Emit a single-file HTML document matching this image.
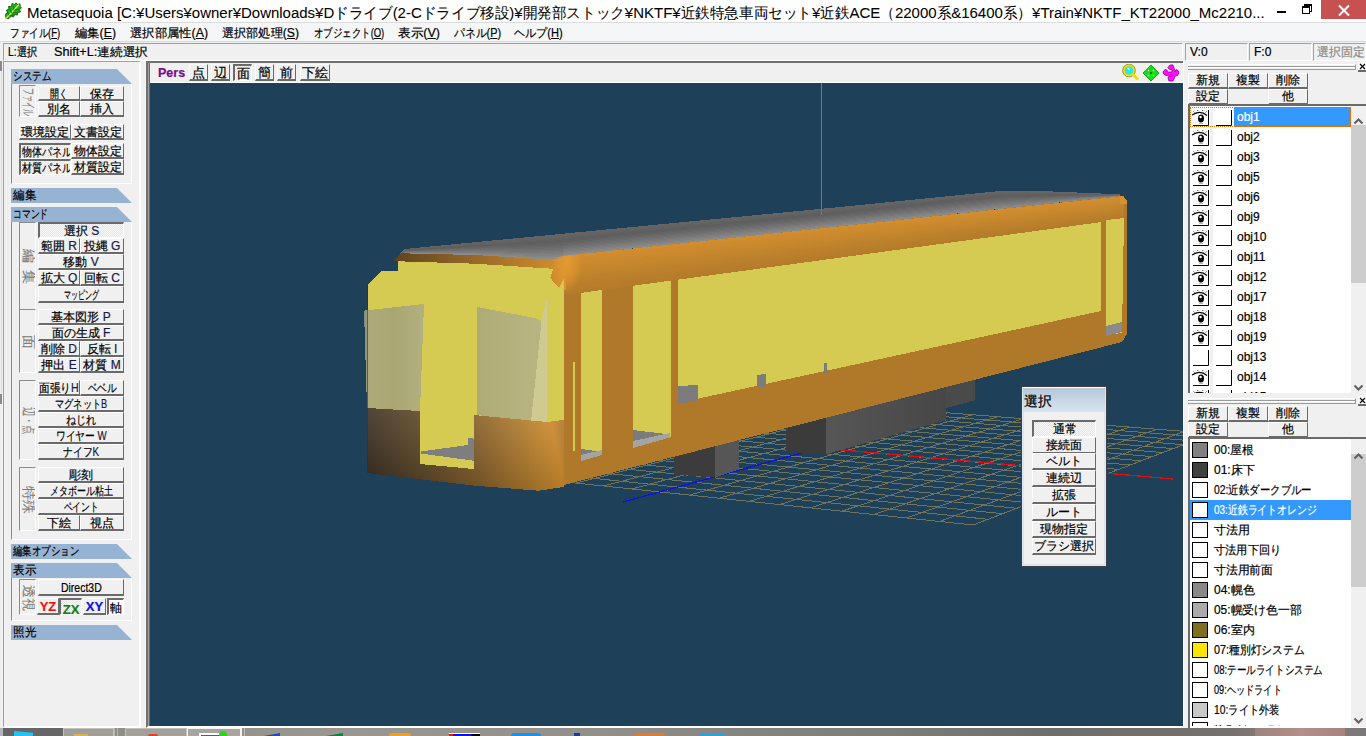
<!DOCTYPE html><html lang="ja"><head><meta charset="utf-8"><style>
*{box-sizing:border-box;margin:0;padding:0}
html,body{width:1366px;height:736px;overflow:hidden;background:#f0f0f0;font-family:"Liberation Sans", sans-serif;position:relative;-webkit-text-stroke-width:0.2px}
div{position:absolute}
.t{white-space:nowrap;line-height:1}
.btn{background:#f0f0f0;border-top:1px solid #fff;border-left:1px solid #fff;border-right:1px solid #6a6a6a;border-bottom:2px solid #6a6a6a;font-size:12px;color:#000;text-align:center;line-height:13px;white-space:nowrap;overflow:hidden}
.prs{border-top:2px solid #6a6a6a;border-left:2px solid #6a6a6a;border-right:1px solid #fff;border-bottom:1px solid #fff;background-color:#f7f7f7;background-image:linear-gradient(45deg,#e6e6e6 25%,transparent 25%,transparent 75%,#e6e6e6 75%),linear-gradient(45deg,#e6e6e6 25%,transparent 25%,transparent 75%,#e6e6e6 75%);background-size:2px 2px;background-position:0 0,1px 1px}
.hdr{background:#97b3d3;font-size:12px;line-height:14px;padding-left:1px;color:#000;clip-path:polygon(0 0,106px 0,121px 100%,0 100%)}
.lbl{border-top:1px solid #8c8c8c;border-left:1px solid #8c8c8c;border-right:1px solid #fff;border-bottom:1px solid #fff;color:#8c8c8c;font-size:11px;writing-mode:vertical-rl;text-align:center;line-height:15px;overflow:hidden}
.grp{border-left:1px solid #fff;border-right:1px solid #fff;border-bottom:1px solid #fff}
.k{color:#16184a}
.sb{border-top:1px solid #a0a0a0;border-left:1px solid #a0a0a0;border-right:1px solid #fff;border-bottom:1px solid #fff;font-size:12px;line-height:16px;padding-left:4px;white-space:nowrap;overflow:hidden}
.row{height:20px;font-size:12px;line-height:20px;white-space:nowrap}
.f{display:inline-block;white-space:nowrap;transform-origin:0 50%}
.fc{display:inline-block;white-space:nowrap;transform-origin:50% 50%}
</style></head><body>

<div style="left:0;top:0;width:1366px;height:23px;background:#fff;border-bottom:1px solid #dcdcdc"></div>
<div style="left:4px;top:2px;width:18px;height:18px"><svg width="18" height="18" viewBox="0 0 18 18">
<path d="M2 16.5 L1.5 12 L3.5 11 L2.5 8 L5 7.5 L4.5 4.5 L7.5 4.5 L8 1.5 L10.5 2.5 L12 0.8 L13.5 2.5 L16 1.8 L16.2 4.5 L17.5 6 L15.5 7.5 L16.5 10 L13.5 10.5 L13.5 13 L10.5 12.5 L9.5 15 L7 14 L5 16.5 Z" fill="#22b020" stroke="#0b5e12" stroke-width="0.9" stroke-linejoin="round"/>
<path d="M2 16.5 L15 2.5" stroke="#d8e850" stroke-width="1.3"/>
<path d="M5 13.5 L3.5 10 M7.5 11 L6 6.5 M10 8.5 L9.5 4 M6.5 13.5 L11 13 M8.5 11 L13.5 10.5 M11 8 L15.5 7" stroke="#0e6a10" stroke-width="0.8"/>
</svg></div>
<div class="t" style="left:27px;top:5px;font-size:15.4px;color:#000;-webkit-text-stroke-width:0.05px"><span class="f" style="--w:1238;transform:scaleX(0.9733)">Metasequoia [C:¥Users¥owner¥Downloads¥Dドライブ(2-Cドライブ移設)¥開発部ストック¥NKTF¥近鉄特急車両セット¥近鉄ACE（22000系&amp;16400系）¥Train¥NKTF_KT22000_Mc2210...</span></div>
<div style="left:1277px;top:11px;width:9px;height:2px;background:#000"></div>
<div style="left:1304px;top:4px;width:8px;height:8px;border:1px solid #000;border-top-width:2px"></div>
<div style="left:1302px;top:6px;width:8px;height:8px;border:1px solid #000;border-top-width:2px;background:#fff"></div>
<div style="left:1321px;top:0;width:45px;height:19px;background:#c75050"></div>
<div style="left:1337px;top:3px;width:14px;height:13px"><svg width="14" height="13"><path d="M2 1.5 L12 11.5 M12 1.5 L2 11.5" stroke="#fff" stroke-width="2"/></svg></div>
<div style="left:0;top:23px;width:1366px;height:19px;background:#f5f6f7;border-bottom:1px solid #d8d8d8"></div>
<div class="t" style="left:10px;top:27px;font-size:12px;color:#000"><span class="f" style="--w:50;transform:scaleX(0.7937)">ファイル(<u>F</u>)</span></div>
<div class="t" style="left:75px;top:27px;font-size:12px;color:#000"><span class="f" style="--w:41;transform:scaleX(1.0250)">編集(<u>E</u>)</span></div>
<div class="t" style="left:130px;top:27px;font-size:12px;color:#000"><span class="f" style="--w:78;transform:scaleX(1.0263)">選択部属性(<u>A</u>)</span></div>
<div class="t" style="left:222px;top:27px;font-size:12px;color:#000"><span class="f" style="--w:77;transform:scaleX(1.0132)">選択部処理(<u>S</u>)</span></div>
<div class="t" style="left:314px;top:27px;font-size:12px;color:#000"><span class="f" style="--w:70;transform:scaleX(0.7865)">オブジェクト(<u>O</u>)</span></div>
<div class="t" style="left:398px;top:27px;font-size:12px;color:#000"><span class="f" style="--w:42;transform:scaleX(1.0500)">表示(<u>V</u>)</span></div>
<div class="t" style="left:454px;top:27px;font-size:12px;color:#000"><span class="f" style="--w:47;transform:scaleX(0.9038)">パネル(<u>P</u>)</span></div>
<div class="t" style="left:514px;top:27px;font-size:12px;color:#000"><span class="f" style="--w:49;transform:scaleX(0.9245)">ヘルプ(<u>H</u>)</span></div>
<div class="sb" style="left:3px;top:43px;width:1180px;height:18px"><span class="f" style="--w:29;transform:scaleX(0.8529)">L:選択</span></div><div class="t" style="left:54px;top:46px;font-size:12px"><span class="f" style="--w:94;transform:scaleX(1.0562)">Shift+L:連続選択</span></div>
<div class="sb" style="left:1185px;top:43px;width:63px;height:18px">V:0</div>
<div class="sb" style="left:1249px;top:43px;width:63px;height:18px">F:0</div>
<div class="sb" style="left:1313px;top:43px;width:53px;height:18px;color:#8a8a8a;padding-left:3px">選択固定</div><div style="left:3px;top:61px;width:138px;height:667px;border-left:1px solid #a0a0a0;border-top:1px solid #a0a0a0;border-right:2px solid #fff;border-bottom:2px solid #fff"></div>
<div style="left:0;top:61px;width:2px;height:10px;background:#8a8a8a"></div>
<div style="left:0;top:394px;width:2px;height:10px;background:#8a8a8a"></div>
<div style="left:1px;top:71px;width:1px;height:323px;background:#dcdcdc"></div>
<div class="hdr" style="left:11px;top:69px;width:121px;height:15px;padding-left:2px"><span class="f" style="--w:38;transform:scaleX(0.7917)">システム</span></div>
<div style="left:11px;top:84px;width:121px;height:100px;border-left:1px solid #8c8c8c;border-right:1px solid #fff;border-bottom:1px solid #fff"></div>
<div style="left:19px;top:85px;width:17px;height:32px;border-top:1px solid #8c8c8c;border-left:1px solid #8c8c8c;border-right:1px solid #fff;border-bottom:1px solid #fff;overflow:hidden"><div style="left:-8.5px;top:7.5px;width:32px;height:15px;transform:rotate(90deg);display:flex;justify-content:center;font-size:13.5px;line-height:15px;color:#7c7c7c;white-space:nowrap;-webkit-text-stroke-width:0.1px"><span class="fc" style="--w:28;transform:scaleX(0.5000)">ファイル</span></div></div>
<div class="btn" style="left:38px;top:86px;width:42px;height:15px;line-height:12px;padding-top:1px;"><span class="fc" style="--w:18;transform:scaleX(0.7500)">開く</span></div>
<div class="btn" style="left:80px;top:86px;width:44px;height:15px;line-height:12px;padding-top:1px;">保存</div>
<div class="btn" style="left:38px;top:101px;width:42px;height:16px;line-height:13px;padding-top:1px;">別名</div>
<div class="btn" style="left:80px;top:101px;width:44px;height:16px;line-height:13px;padding-top:1px;">挿入</div>
<div class="btn" style="left:19px;top:124px;width:52px;height:16px;line-height:13px;padding-top:1px;">環境設定</div>
<div class="btn" style="left:71px;top:124px;width:53px;height:16px;line-height:13px;padding-top:1px;">文書設定</div>
<div class="btn prs" style="left:19px;top:143px;width:52px;height:16px;line-height:13px;padding-top:1px;text-align:left;padding-left:1px"><span class="f" style="--w:50;transform:scaleX(0.8333)">物体パネル</span></div>
<div class="btn" style="left:71px;top:143px;width:53px;height:16px;line-height:13px;padding-top:1px;">物体設定</div>
<div class="btn prs" style="left:19px;top:159px;width:52px;height:16px;line-height:13px;padding-top:1px;text-align:left;padding-left:1px"><span class="f" style="--w:50;transform:scaleX(0.8333)">材質パネル</span></div>
<div class="btn" style="left:71px;top:159px;width:53px;height:16px;line-height:13px;padding-top:1px;">材質設定</div>
<div class="hdr" style="left:11px;top:188px;width:121px;height:15px;padding-left:2px"><span class="f" style="--w:23;transform:scaleX(0.9583)">編集</span></div>
<div class="hdr" style="left:11px;top:207px;width:121px;height:15px;padding-left:2px"><span class="f" style="--w:35;transform:scaleX(0.7292)">コマンド</span></div>
<div style="left:11px;top:222px;width:121px;height:318px;border-left:1px solid #8c8c8c;border-right:1px solid #fff;border-bottom:1px solid #fff"></div>
<div style="left:19px;top:222px;width:17px;height:88px;border-top:1px solid #8c8c8c;border-left:1px solid #8c8c8c;border-right:1px solid #fff;border-bottom:1px solid #fff;overflow:hidden"><div style="left:-36.5px;top:35.5px;width:88px;height:15px;transform:rotate(90deg);display:flex;justify-content:center;font-size:13.5px;line-height:15px;color:#7c7c7c;white-space:nowrap;-webkit-text-stroke-width:0.1px"><span style="letter-spacing:7px;padding-left:7px">編集</span></div></div>
<div class="btn prs" style="left:38px;top:222px;width:86px;height:16px;line-height:13px;padding-top:1px;">選択 <span class="k">S</span></div>
<div class="btn" style="left:38px;top:238px;width:42px;height:16px;line-height:13px;padding-top:1px;">範囲 <span class="k">R</span></div>
<div class="btn" style="left:80px;top:238px;width:44px;height:16px;line-height:13px;padding-top:1px;">投縄 <span class="k">G</span></div>
<div class="btn" style="left:38px;top:254px;width:86px;height:16px;line-height:13px;padding-top:1px;">移動 <span class="k">V</span></div>
<div class="btn" style="left:38px;top:270px;width:42px;height:16px;line-height:13px;padding-top:1px;">拡大 <span class="k">Q</span></div>
<div class="btn" style="left:80px;top:270px;width:44px;height:16px;line-height:13px;padding-top:1px;">回転 <span class="k">C</span></div>
<div class="btn" style="left:38px;top:286px;width:86px;height:17px;line-height:14px;padding-top:1px;"><span class="fc" style="--w:35;transform:scaleX(0.5833)">マッピング</span></div>
<div style="left:19px;top:309px;width:17px;height:64px;border-top:1px solid #8c8c8c;border-left:1px solid #8c8c8c;border-right:1px solid #fff;border-bottom:1px solid #fff;overflow:hidden"><div style="left:-24.5px;top:23.5px;width:64px;height:15px;transform:rotate(90deg);display:flex;justify-content:center;font-size:13.5px;line-height:15px;color:#7c7c7c;white-space:nowrap;-webkit-text-stroke-width:0.1px"><span style="letter-spacing:0px;padding-left:0px">面</span></div></div>
<div class="btn" style="left:38px;top:309px;width:86px;height:16px;line-height:13px;padding-top:1px;">基本図形 <span class="k">P</span></div>
<div class="btn" style="left:38px;top:325px;width:86px;height:16px;line-height:13px;padding-top:1px;">面の生成 <span class="k">F</span></div>
<div class="btn" style="left:38px;top:341px;width:42px;height:16px;line-height:13px;padding-top:1px;">削除 <span class="k">D</span></div>
<div class="btn" style="left:80px;top:341px;width:44px;height:16px;line-height:13px;padding-top:1px;">反転 <span class="k">I</span></div>
<div class="btn" style="left:38px;top:357px;width:42px;height:16px;line-height:13px;padding-top:1px;">押出 <span class="k">E</span></div>
<div class="btn" style="left:80px;top:357px;width:44px;height:16px;line-height:13px;padding-top:1px;">材質 <span class="k">M</span></div>
<div style="left:19px;top:380px;width:17px;height:80px;border-top:1px solid #8c8c8c;border-left:1px solid #8c8c8c;border-right:1px solid #fff;border-bottom:1px solid #fff;overflow:hidden"><div style="left:-32.5px;top:31.5px;width:80px;height:15px;transform:rotate(90deg);display:flex;justify-content:center;font-size:13.5px;line-height:15px;color:#7c7c7c;white-space:nowrap;-webkit-text-stroke-width:0.1px"><span class="fc" style="--w:28;transform:scaleX(0.6667)">辺・点</span></div></div>
<div class="btn" style="left:38px;top:380px;width:42px;height:16px;line-height:13px;padding-top:1px;"><span class="f" style="--w:40;transform:scaleX(0.8889)">面張り<span class="k">H</span></span></div>
<div class="btn" style="left:80px;top:380px;width:44px;height:16px;line-height:13px;padding-top:1px;"><span class="fc" style="--w:29;transform:scaleX(0.8056)">ベベル</span></div>
<div class="btn" style="left:38px;top:396px;width:86px;height:16px;line-height:13px;padding-top:1px;"><span class="fc" style="--w:52;transform:scaleX(0.7647)">マグネット<span class="k">B</span></span></div>
<div class="btn" style="left:38px;top:412px;width:86px;height:16px;line-height:13px;padding-top:1px;"><span class="fc" style="--w:30;transform:scaleX(0.8333)">ねじれ</span></div>
<div class="btn" style="left:38px;top:428px;width:86px;height:16px;line-height:13px;padding-top:1px;"><span class="fc" style="--w:51;transform:scaleX(0.8095)">ワイヤー <span class="k">W</span></span></div>
<div class="btn" style="left:38px;top:444px;width:86px;height:16px;line-height:13px;padding-top:1px;"><span class="fc" style="--w:36;transform:scaleX(0.8182)">ナイフ<span class="k">K</span></span></div>
<div style="left:19px;top:467px;width:17px;height:64px;border-top:1px solid #8c8c8c;border-left:1px solid #8c8c8c;border-right:1px solid #fff;border-bottom:1px solid #fff;overflow:hidden"><div style="left:-24.5px;top:23.5px;width:64px;height:15px;transform:rotate(90deg);display:flex;justify-content:center;font-size:13.5px;line-height:15px;color:#7c7c7c;white-space:nowrap;-webkit-text-stroke-width:0.1px"><span style="letter-spacing:0px;padding-left:0px">特殊</span></div></div>
<div class="btn" style="left:38px;top:467px;width:86px;height:16px;line-height:13px;padding-top:1px;">彫刻</div>
<div class="btn" style="left:38px;top:483px;width:86px;height:16px;line-height:13px;padding-top:1px;"><span class="fc" style="--w:63;transform:scaleX(0.7500)">メタボール粘土</span></div>
<div class="btn" style="left:38px;top:499px;width:86px;height:16px;line-height:13px;padding-top:1px;"><span class="fc" style="--w:35;transform:scaleX(0.7292)">ペイント</span></div>
<div class="btn" style="left:38px;top:515px;width:42px;height:16px;line-height:13px;padding-top:1px;">下絵</div>
<div class="btn" style="left:80px;top:515px;width:44px;height:16px;line-height:13px;padding-top:1px;">視点</div>
<div class="hdr" style="left:11px;top:544px;width:121px;height:15px;padding-left:2px"><span class="f" style="--w:66;transform:scaleX(0.7857)">編集オプション</span></div>
<div class="hdr" style="left:11px;top:563px;width:121px;height:15px;padding-left:2px"><span class="f" style="--w:23;transform:scaleX(0.9583)">表示</span></div>
<div style="left:11px;top:578px;width:121px;height:43px;border-left:1px solid #8c8c8c;border-right:1px solid #fff;border-bottom:1px solid #fff"></div>
<div style="left:19px;top:579px;width:17px;height:36px;border-top:1px solid #8c8c8c;border-left:1px solid #8c8c8c;border-right:1px solid #fff;border-bottom:1px solid #fff;overflow:hidden"><div style="left:-10.5px;top:9.5px;width:36px;height:15px;transform:rotate(90deg);display:flex;justify-content:center;font-size:13.5px;line-height:15px;color:#7c7c7c;white-space:nowrap;-webkit-text-stroke-width:0.1px"><span class="fc" style="--w:26;transform:scaleX(0.9286)">透視</span></div></div>
<div class="btn" style="left:38px;top:579px;width:86px;height:17px;line-height:14px;padding-top:1px;"><span class="fc" style="--w:41;transform:scaleX(0.8723)">Direct3D</span></div>
<div class="btn" style="left:37px;top:598px;width:22px;height:17px;line-height:14px;padding-top:1px;"><b style="color:#f01010;font-size:13px;font-style:normal">YZ</b></div>
<div class="btn prs" style="left:59px;top:598px;width:23px;height:17px;line-height:14px;padding-top:1px;"><b style="color:#108010;font-size:13px;font-style:normal;position:relative;top:2px">ZX</b></div>
<div class="btn" style="left:83px;top:598px;width:23px;height:17px;line-height:14px;padding-top:1px;"><b style="color:#1010e0;font-size:13px;font-style:normal">XY</b></div>
<div class="btn prs" style="left:107px;top:598px;width:17px;height:17px;line-height:14px;padding-top:1px;background:#fff">軸</div>
<div class="hdr" style="left:11px;top:625px;width:121px;height:15px;padding-left:2px"><span class="f" style="--w:23;transform:scaleX(0.9583)">照光</span></div><div style="left:1188px;top:64px;width:168px;height:6px;border-top:1px solid #fff;border-bottom:1px solid #9a9a9a;border-right:1px solid #9a9a9a"></div><div style="left:1188px;top:66px;width:167px;height:2px;border-top:1px solid #9a9a9a;border-bottom:1px solid #fff"></div>
<div style="left:1358px;top:62px;width:8px;height:10px;background:#f8f8f8;border-bottom:2px solid #6a6a6a"><svg width="8" height="8" style="position:absolute;left:1px;top:1px"><path d="M1 1 L6 6 M6 1 L1 6" stroke="#000" stroke-width="1.1"/></svg></div>
<div class="btn" style="left:1188px;top:73px;width:40px;height:16px;line-height:13px;">新規</div>
<div class="btn" style="left:1228px;top:73px;width:40px;height:16px;line-height:13px;">複製</div>
<div class="btn" style="left:1268px;top:73px;width:40px;height:16px;line-height:13px;">削除</div>
<div class="btn" style="left:1188px;top:89px;width:40px;height:16px;line-height:13px;">設定</div>
<div class="btn" style="left:1268px;top:89px;width:40px;height:16px;line-height:13px;">他</div>
<div style="left:1188px;top:104px;width:178px;height:289px;background:#fff;border-top:2px solid #6a6a6a;border-left:2px solid #6a6a6a;overflow:hidden"></div>
<div style="left:1190px;top:107px;width:161px;height:20px;overflow:hidden"><div style="left:0;top:0;width:20px;height:20px;background:#fff"><svg width="20" height="20" viewBox="0 0 20 20" style="position:absolute;left:0;top:0"><path d="M2 8 Q10 2.5 17 8.5" stroke="#000" fill="none" stroke-width="1.2"/><path d="M4.5 5.5 L3.5 4.5 M8 4 L7.5 3 M12.5 4 L13 3 M15.5 5.5 L16.5 4.5" stroke="#000" stroke-width="0.7"/><ellipse cx="11" cy="11.5" rx="3" ry="4" fill="#000"/><circle cx="10.6" cy="10" r="1.2" fill="#fff"/><path d="M9 16.5 L13 16.5" stroke="#888" stroke-width="0.6"/><path d="M18.5 3 L18.5 18.5 L3 18.5" stroke="#000" stroke-width="1" fill="none"/></svg></div><div style="left:20px;top:0;width:3px;height:20px;background:#f0f0f0"></div><div style="left:23px;top:0;width:20px;height:20px;background:#fff"><svg width="20" height="20" viewBox="0 0 20 20" style="position:absolute;left:0;top:0"><path d="M18.5 3 L18.5 18.5 L3 18.5" stroke="#000" stroke-width="1" fill="none"/></svg></div><div style="left:44px;top:0;width:117px;height:20px;background:#3399ff"></div><div style="left:0;top:0;width:161px;height:20px;border:1px dotted #e07000"></div><div class="t" style="left:47px;top:4px;font-size:12px;color:#fff">obj1</div></div>
<div style="left:1190px;top:127px;width:161px;height:20px;overflow:hidden"><div style="left:0;top:0;width:20px;height:20px;background:#fff"><svg width="20" height="20" viewBox="0 0 20 20" style="position:absolute;left:0;top:0"><path d="M2 8 Q10 2.5 17 8.5" stroke="#000" fill="none" stroke-width="1.2"/><path d="M4.5 5.5 L3.5 4.5 M8 4 L7.5 3 M12.5 4 L13 3 M15.5 5.5 L16.5 4.5" stroke="#000" stroke-width="0.7"/><ellipse cx="11" cy="11.5" rx="3" ry="4" fill="#000"/><circle cx="10.6" cy="10" r="1.2" fill="#fff"/><path d="M9 16.5 L13 16.5" stroke="#888" stroke-width="0.6"/><path d="M18.5 3 L18.5 18.5 L3 18.5" stroke="#000" stroke-width="1" fill="none"/></svg></div><div style="left:20px;top:0;width:3px;height:20px;background:#f0f0f0"></div><div style="left:23px;top:0;width:20px;height:20px;background:#fff"><svg width="20" height="20" viewBox="0 0 20 20" style="position:absolute;left:0;top:0"><path d="M18.5 3 L18.5 18.5 L3 18.5" stroke="#000" stroke-width="1" fill="none"/></svg></div><div class="t" style="left:47px;top:4px;font-size:12px;color:#000">obj2</div></div>
<div style="left:1190px;top:147px;width:161px;height:20px;overflow:hidden"><div style="left:0;top:0;width:20px;height:20px;background:#fff"><svg width="20" height="20" viewBox="0 0 20 20" style="position:absolute;left:0;top:0"><path d="M2 8 Q10 2.5 17 8.5" stroke="#000" fill="none" stroke-width="1.2"/><path d="M4.5 5.5 L3.5 4.5 M8 4 L7.5 3 M12.5 4 L13 3 M15.5 5.5 L16.5 4.5" stroke="#000" stroke-width="0.7"/><ellipse cx="11" cy="11.5" rx="3" ry="4" fill="#000"/><circle cx="10.6" cy="10" r="1.2" fill="#fff"/><path d="M9 16.5 L13 16.5" stroke="#888" stroke-width="0.6"/><path d="M18.5 3 L18.5 18.5 L3 18.5" stroke="#000" stroke-width="1" fill="none"/></svg></div><div style="left:20px;top:0;width:3px;height:20px;background:#f0f0f0"></div><div style="left:23px;top:0;width:20px;height:20px;background:#fff"><svg width="20" height="20" viewBox="0 0 20 20" style="position:absolute;left:0;top:0"><path d="M18.5 3 L18.5 18.5 L3 18.5" stroke="#000" stroke-width="1" fill="none"/></svg></div><div class="t" style="left:47px;top:4px;font-size:12px;color:#000">obj3</div></div>
<div style="left:1190px;top:167px;width:161px;height:20px;overflow:hidden"><div style="left:0;top:0;width:20px;height:20px;background:#fff"><svg width="20" height="20" viewBox="0 0 20 20" style="position:absolute;left:0;top:0"><path d="M2 8 Q10 2.5 17 8.5" stroke="#000" fill="none" stroke-width="1.2"/><path d="M4.5 5.5 L3.5 4.5 M8 4 L7.5 3 M12.5 4 L13 3 M15.5 5.5 L16.5 4.5" stroke="#000" stroke-width="0.7"/><ellipse cx="11" cy="11.5" rx="3" ry="4" fill="#000"/><circle cx="10.6" cy="10" r="1.2" fill="#fff"/><path d="M9 16.5 L13 16.5" stroke="#888" stroke-width="0.6"/><path d="M18.5 3 L18.5 18.5 L3 18.5" stroke="#000" stroke-width="1" fill="none"/></svg></div><div style="left:20px;top:0;width:3px;height:20px;background:#f0f0f0"></div><div style="left:23px;top:0;width:20px;height:20px;background:#fff"><svg width="20" height="20" viewBox="0 0 20 20" style="position:absolute;left:0;top:0"><path d="M18.5 3 L18.5 18.5 L3 18.5" stroke="#000" stroke-width="1" fill="none"/></svg></div><div class="t" style="left:47px;top:4px;font-size:12px;color:#000">obj5</div></div>
<div style="left:1190px;top:187px;width:161px;height:20px;overflow:hidden"><div style="left:0;top:0;width:20px;height:20px;background:#fff"><svg width="20" height="20" viewBox="0 0 20 20" style="position:absolute;left:0;top:0"><path d="M2 8 Q10 2.5 17 8.5" stroke="#000" fill="none" stroke-width="1.2"/><path d="M4.5 5.5 L3.5 4.5 M8 4 L7.5 3 M12.5 4 L13 3 M15.5 5.5 L16.5 4.5" stroke="#000" stroke-width="0.7"/><ellipse cx="11" cy="11.5" rx="3" ry="4" fill="#000"/><circle cx="10.6" cy="10" r="1.2" fill="#fff"/><path d="M9 16.5 L13 16.5" stroke="#888" stroke-width="0.6"/><path d="M18.5 3 L18.5 18.5 L3 18.5" stroke="#000" stroke-width="1" fill="none"/></svg></div><div style="left:20px;top:0;width:3px;height:20px;background:#f0f0f0"></div><div style="left:23px;top:0;width:20px;height:20px;background:#fff"><svg width="20" height="20" viewBox="0 0 20 20" style="position:absolute;left:0;top:0"><path d="M18.5 3 L18.5 18.5 L3 18.5" stroke="#000" stroke-width="1" fill="none"/></svg></div><div class="t" style="left:47px;top:4px;font-size:12px;color:#000">obj6</div></div>
<div style="left:1190px;top:207px;width:161px;height:20px;overflow:hidden"><div style="left:0;top:0;width:20px;height:20px;background:#fff"><svg width="20" height="20" viewBox="0 0 20 20" style="position:absolute;left:0;top:0"><path d="M2 8 Q10 2.5 17 8.5" stroke="#000" fill="none" stroke-width="1.2"/><path d="M4.5 5.5 L3.5 4.5 M8 4 L7.5 3 M12.5 4 L13 3 M15.5 5.5 L16.5 4.5" stroke="#000" stroke-width="0.7"/><ellipse cx="11" cy="11.5" rx="3" ry="4" fill="#000"/><circle cx="10.6" cy="10" r="1.2" fill="#fff"/><path d="M9 16.5 L13 16.5" stroke="#888" stroke-width="0.6"/><path d="M18.5 3 L18.5 18.5 L3 18.5" stroke="#000" stroke-width="1" fill="none"/></svg></div><div style="left:20px;top:0;width:3px;height:20px;background:#f0f0f0"></div><div style="left:23px;top:0;width:20px;height:20px;background:#fff"><svg width="20" height="20" viewBox="0 0 20 20" style="position:absolute;left:0;top:0"><path d="M18.5 3 L18.5 18.5 L3 18.5" stroke="#000" stroke-width="1" fill="none"/></svg></div><div class="t" style="left:47px;top:4px;font-size:12px;color:#000">obj9</div></div>
<div style="left:1190px;top:227px;width:161px;height:20px;overflow:hidden"><div style="left:0;top:0;width:20px;height:20px;background:#fff"><svg width="20" height="20" viewBox="0 0 20 20" style="position:absolute;left:0;top:0"><path d="M2 8 Q10 2.5 17 8.5" stroke="#000" fill="none" stroke-width="1.2"/><path d="M4.5 5.5 L3.5 4.5 M8 4 L7.5 3 M12.5 4 L13 3 M15.5 5.5 L16.5 4.5" stroke="#000" stroke-width="0.7"/><ellipse cx="11" cy="11.5" rx="3" ry="4" fill="#000"/><circle cx="10.6" cy="10" r="1.2" fill="#fff"/><path d="M9 16.5 L13 16.5" stroke="#888" stroke-width="0.6"/><path d="M18.5 3 L18.5 18.5 L3 18.5" stroke="#000" stroke-width="1" fill="none"/></svg></div><div style="left:20px;top:0;width:3px;height:20px;background:#f0f0f0"></div><div style="left:23px;top:0;width:20px;height:20px;background:#fff"><svg width="20" height="20" viewBox="0 0 20 20" style="position:absolute;left:0;top:0"><path d="M18.5 3 L18.5 18.5 L3 18.5" stroke="#000" stroke-width="1" fill="none"/></svg></div><div class="t" style="left:47px;top:4px;font-size:12px;color:#000">obj10</div></div>
<div style="left:1190px;top:247px;width:161px;height:20px;overflow:hidden"><div style="left:0;top:0;width:20px;height:20px;background:#fff"><svg width="20" height="20" viewBox="0 0 20 20" style="position:absolute;left:0;top:0"><path d="M2 8 Q10 2.5 17 8.5" stroke="#000" fill="none" stroke-width="1.2"/><path d="M4.5 5.5 L3.5 4.5 M8 4 L7.5 3 M12.5 4 L13 3 M15.5 5.5 L16.5 4.5" stroke="#000" stroke-width="0.7"/><ellipse cx="11" cy="11.5" rx="3" ry="4" fill="#000"/><circle cx="10.6" cy="10" r="1.2" fill="#fff"/><path d="M9 16.5 L13 16.5" stroke="#888" stroke-width="0.6"/><path d="M18.5 3 L18.5 18.5 L3 18.5" stroke="#000" stroke-width="1" fill="none"/></svg></div><div style="left:20px;top:0;width:3px;height:20px;background:#f0f0f0"></div><div style="left:23px;top:0;width:20px;height:20px;background:#fff"><svg width="20" height="20" viewBox="0 0 20 20" style="position:absolute;left:0;top:0"><path d="M18.5 3 L18.5 18.5 L3 18.5" stroke="#000" stroke-width="1" fill="none"/></svg></div><div class="t" style="left:47px;top:4px;font-size:12px;color:#000">obj11</div></div>
<div style="left:1190px;top:267px;width:161px;height:20px;overflow:hidden"><div style="left:0;top:0;width:20px;height:20px;background:#fff"><svg width="20" height="20" viewBox="0 0 20 20" style="position:absolute;left:0;top:0"><path d="M2 8 Q10 2.5 17 8.5" stroke="#000" fill="none" stroke-width="1.2"/><path d="M4.5 5.5 L3.5 4.5 M8 4 L7.5 3 M12.5 4 L13 3 M15.5 5.5 L16.5 4.5" stroke="#000" stroke-width="0.7"/><ellipse cx="11" cy="11.5" rx="3" ry="4" fill="#000"/><circle cx="10.6" cy="10" r="1.2" fill="#fff"/><path d="M9 16.5 L13 16.5" stroke="#888" stroke-width="0.6"/><path d="M18.5 3 L18.5 18.5 L3 18.5" stroke="#000" stroke-width="1" fill="none"/></svg></div><div style="left:20px;top:0;width:3px;height:20px;background:#f0f0f0"></div><div style="left:23px;top:0;width:20px;height:20px;background:#fff"><svg width="20" height="20" viewBox="0 0 20 20" style="position:absolute;left:0;top:0"><path d="M18.5 3 L18.5 18.5 L3 18.5" stroke="#000" stroke-width="1" fill="none"/></svg></div><div class="t" style="left:47px;top:4px;font-size:12px;color:#000">obj12</div></div>
<div style="left:1190px;top:287px;width:161px;height:20px;overflow:hidden"><div style="left:0;top:0;width:20px;height:20px;background:#fff"><svg width="20" height="20" viewBox="0 0 20 20" style="position:absolute;left:0;top:0"><path d="M2 8 Q10 2.5 17 8.5" stroke="#000" fill="none" stroke-width="1.2"/><path d="M4.5 5.5 L3.5 4.5 M8 4 L7.5 3 M12.5 4 L13 3 M15.5 5.5 L16.5 4.5" stroke="#000" stroke-width="0.7"/><ellipse cx="11" cy="11.5" rx="3" ry="4" fill="#000"/><circle cx="10.6" cy="10" r="1.2" fill="#fff"/><path d="M9 16.5 L13 16.5" stroke="#888" stroke-width="0.6"/><path d="M18.5 3 L18.5 18.5 L3 18.5" stroke="#000" stroke-width="1" fill="none"/></svg></div><div style="left:20px;top:0;width:3px;height:20px;background:#f0f0f0"></div><div style="left:23px;top:0;width:20px;height:20px;background:#fff"><svg width="20" height="20" viewBox="0 0 20 20" style="position:absolute;left:0;top:0"><path d="M18.5 3 L18.5 18.5 L3 18.5" stroke="#000" stroke-width="1" fill="none"/></svg></div><div class="t" style="left:47px;top:4px;font-size:12px;color:#000">obj17</div></div>
<div style="left:1190px;top:307px;width:161px;height:20px;overflow:hidden"><div style="left:0;top:0;width:20px;height:20px;background:#fff"><svg width="20" height="20" viewBox="0 0 20 20" style="position:absolute;left:0;top:0"><path d="M2 8 Q10 2.5 17 8.5" stroke="#000" fill="none" stroke-width="1.2"/><path d="M4.5 5.5 L3.5 4.5 M8 4 L7.5 3 M12.5 4 L13 3 M15.5 5.5 L16.5 4.5" stroke="#000" stroke-width="0.7"/><ellipse cx="11" cy="11.5" rx="3" ry="4" fill="#000"/><circle cx="10.6" cy="10" r="1.2" fill="#fff"/><path d="M9 16.5 L13 16.5" stroke="#888" stroke-width="0.6"/><path d="M18.5 3 L18.5 18.5 L3 18.5" stroke="#000" stroke-width="1" fill="none"/></svg></div><div style="left:20px;top:0;width:3px;height:20px;background:#f0f0f0"></div><div style="left:23px;top:0;width:20px;height:20px;background:#fff"><svg width="20" height="20" viewBox="0 0 20 20" style="position:absolute;left:0;top:0"><path d="M18.5 3 L18.5 18.5 L3 18.5" stroke="#000" stroke-width="1" fill="none"/></svg></div><div class="t" style="left:47px;top:4px;font-size:12px;color:#000">obj18</div></div>
<div style="left:1190px;top:327px;width:161px;height:20px;overflow:hidden"><div style="left:0;top:0;width:20px;height:20px;background:#fff"><svg width="20" height="20" viewBox="0 0 20 20" style="position:absolute;left:0;top:0"><path d="M2 8 Q10 2.5 17 8.5" stroke="#000" fill="none" stroke-width="1.2"/><path d="M4.5 5.5 L3.5 4.5 M8 4 L7.5 3 M12.5 4 L13 3 M15.5 5.5 L16.5 4.5" stroke="#000" stroke-width="0.7"/><ellipse cx="11" cy="11.5" rx="3" ry="4" fill="#000"/><circle cx="10.6" cy="10" r="1.2" fill="#fff"/><path d="M9 16.5 L13 16.5" stroke="#888" stroke-width="0.6"/><path d="M18.5 3 L18.5 18.5 L3 18.5" stroke="#000" stroke-width="1" fill="none"/></svg></div><div style="left:20px;top:0;width:3px;height:20px;background:#f0f0f0"></div><div style="left:23px;top:0;width:20px;height:20px;background:#fff"><svg width="20" height="20" viewBox="0 0 20 20" style="position:absolute;left:0;top:0"><path d="M18.5 3 L18.5 18.5 L3 18.5" stroke="#000" stroke-width="1" fill="none"/></svg></div><div class="t" style="left:47px;top:4px;font-size:12px;color:#000">obj19</div></div>
<div style="left:1190px;top:347px;width:161px;height:20px;overflow:hidden"><div style="left:0;top:0;width:20px;height:20px;background:#fff"><svg width="20" height="20" viewBox="0 0 20 20" style="position:absolute;left:0;top:0"><path d="M18.5 3 L18.5 18.5 L3 18.5" stroke="#000" stroke-width="1" fill="none"/></svg></div><div style="left:20px;top:0;width:3px;height:20px;background:#f0f0f0"></div><div style="left:23px;top:0;width:20px;height:20px;background:#fff"><svg width="20" height="20" viewBox="0 0 20 20" style="position:absolute;left:0;top:0"><path d="M18.5 3 L18.5 18.5 L3 18.5" stroke="#000" stroke-width="1" fill="none"/></svg></div><div class="t" style="left:47px;top:4px;font-size:12px;color:#000">obj13</div></div>
<div style="left:1190px;top:367px;width:161px;height:20px;overflow:hidden"><div style="left:0;top:0;width:20px;height:20px;background:#fff"><svg width="20" height="20" viewBox="0 0 20 20" style="position:absolute;left:0;top:0"><path d="M2 8 Q10 2.5 17 8.5" stroke="#000" fill="none" stroke-width="1.2"/><path d="M4.5 5.5 L3.5 4.5 M8 4 L7.5 3 M12.5 4 L13 3 M15.5 5.5 L16.5 4.5" stroke="#000" stroke-width="0.7"/><ellipse cx="11" cy="11.5" rx="3" ry="4" fill="#000"/><circle cx="10.6" cy="10" r="1.2" fill="#fff"/><path d="M9 16.5 L13 16.5" stroke="#888" stroke-width="0.6"/><path d="M18.5 3 L18.5 18.5 L3 18.5" stroke="#000" stroke-width="1" fill="none"/></svg></div><div style="left:20px;top:0;width:3px;height:20px;background:#f0f0f0"></div><div style="left:23px;top:0;width:20px;height:20px;background:#fff"><svg width="20" height="20" viewBox="0 0 20 20" style="position:absolute;left:0;top:0"><path d="M18.5 3 L18.5 18.5 L3 18.5" stroke="#000" stroke-width="1" fill="none"/></svg></div><div class="t" style="left:47px;top:4px;font-size:12px;color:#000">obj14</div></div>
<div style="left:1190px;top:387px;width:161px;height:6px;overflow:hidden"><div style="left:0;top:0;width:20px;height:20px;background:#fff"><svg width="20" height="20" viewBox="0 0 20 20" style="position:absolute;left:0;top:0"><path d="M2 8 Q10 2.5 17 8.5" stroke="#000" fill="none" stroke-width="1.2"/><path d="M4.5 5.5 L3.5 4.5 M8 4 L7.5 3 M12.5 4 L13 3 M15.5 5.5 L16.5 4.5" stroke="#000" stroke-width="0.7"/><ellipse cx="11" cy="11.5" rx="3" ry="4" fill="#000"/><circle cx="10.6" cy="10" r="1.2" fill="#fff"/><path d="M9 16.5 L13 16.5" stroke="#888" stroke-width="0.6"/><path d="M18.5 3 L18.5 18.5 L3 18.5" stroke="#000" stroke-width="1" fill="none"/></svg></div><div style="left:20px;top:0;width:3px;height:20px;background:#f0f0f0"></div><div style="left:23px;top:0;width:20px;height:20px;background:#fff"><svg width="20" height="20" viewBox="0 0 20 20" style="position:absolute;left:0;top:0"><path d="M18.5 3 L18.5 18.5 L3 18.5" stroke="#000" stroke-width="1" fill="none"/></svg></div><div class="t" style="left:47px;top:4px;font-size:12px;color:#000">obj15</div></div>
<div style="left:1351px;top:106px;width:15px;height:287px;background:#f0f0f0"></div>
<div style="left:1351px;top:125px;width:15px;height:158px;background:#cdcdcd"></div>
<div style="left:1353px;top:111px;width:11px;height:8px"><svg width="11" height="8"><path d="M1.5 6.5 L5.5 2.5 L9.5 6.5" stroke="#606060" stroke-width="2" fill="none"/></svg></div>
<div style="left:1353px;top:378px;width:11px;height:8px"><svg width="11" height="8"><path d="M1.5 1.5 L5.5 5.5 L9.5 1.5" stroke="#606060" stroke-width="2" fill="none"/></svg></div>
<div style="left:1188px;top:398px;width:168px;height:6px;border-top:1px solid #fff;border-bottom:1px solid #9a9a9a;border-right:1px solid #9a9a9a"></div><div style="left:1188px;top:400px;width:167px;height:2px;border-top:1px solid #9a9a9a;border-bottom:1px solid #fff"></div>
<div style="left:1358px;top:396px;width:8px;height:10px;background:#f8f8f8;border-bottom:2px solid #6a6a6a"><svg width="8" height="8" style="position:absolute;left:1px;top:1px"><path d="M1 1 L6 6 M6 1 L1 6" stroke="#000" stroke-width="1.1"/></svg></div>
<div class="btn" style="left:1188px;top:406px;width:40px;height:16px;line-height:13px;">新規</div>
<div class="btn" style="left:1228px;top:406px;width:40px;height:16px;line-height:13px;">複製</div>
<div class="btn" style="left:1268px;top:406px;width:40px;height:16px;line-height:13px;">削除</div>
<div class="btn" style="left:1188px;top:422px;width:40px;height:16px;line-height:13px;">設定</div>
<div class="btn" style="left:1268px;top:422px;width:40px;height:16px;line-height:13px;">他</div>
<div style="left:1188px;top:437px;width:178px;height:291px;background:#fff;border-top:2px solid #6a6a6a;border-left:2px solid #6a6a6a"></div>
<div style="left:1190px;top:440px;width:161px;height:20px;overflow:hidden;"><div style="left:2px;top:2px;width:16px;height:16px;background:#808080;border:1px solid #000"></div><div class="t" style="left:24px;top:4px;font-size:12px;color:#000"><span class="f" style="--w:40;transform:scaleX(0.9756)"><span class="n">00:</span>屋根</span></div></div>
<div style="left:1190px;top:460px;width:161px;height:20px;overflow:hidden;"><div style="left:2px;top:2px;width:16px;height:16px;background:#404040;border:1px solid #000"></div><div class="t" style="left:24px;top:4px;font-size:12px;color:#000"><span class="f" style="--w:41;transform:scaleX(1.0000)"><span class="n">01:</span>床下</span></div></div>
<div style="left:1190px;top:480px;width:161px;height:20px;overflow:hidden;"><div style="left:2px;top:2px;width:16px;height:16px;background:#fff;border:1px solid #000"></div><div class="t" style="left:24px;top:4px;font-size:12px;color:#000"><span class="f" style="--w:98;transform:scaleX(0.8673)"><span class="n">02:</span>近鉄ダークブルー</span></div></div>
<div style="left:1190px;top:500px;width:161px;height:20px;overflow:hidden;background:#3399ff;"><div style="left:2px;top:2px;width:16px;height:16px;background:#fff;border:1px solid #000"></div><div class="t" style="left:24px;top:4px;font-size:12px;color:#fff"><span class="f" style="--w:103;transform:scaleX(0.8240)"><span class="n">03:</span>近鉄ライトオレンジ</span></div></div>
<div style="left:1190px;top:520px;width:161px;height:20px;overflow:hidden;"><div style="left:2px;top:2px;width:16px;height:16px;background:#fff;border:1px solid #000"></div><div class="t" style="left:24px;top:4px;font-size:12px;color:#000"><span class="f" style="--w:36;transform:scaleX(1.0000)">寸法用</span></div></div>
<div style="left:1190px;top:540px;width:161px;height:20px;overflow:hidden;"><div style="left:2px;top:2px;width:16px;height:16px;background:#fff;border:1px solid #000"></div><div class="t" style="left:24px;top:4px;font-size:12px;color:#000"><span class="f" style="--w:67;transform:scaleX(0.9306)">寸法用下回り</span></div></div>
<div style="left:1190px;top:560px;width:161px;height:20px;overflow:hidden;"><div style="left:2px;top:2px;width:16px;height:16px;background:#fff;border:1px solid #000"></div><div class="t" style="left:24px;top:4px;font-size:12px;color:#000"><span class="f" style="--w:59;transform:scaleX(0.9833)">寸法用前面</span></div></div>
<div style="left:1190px;top:580px;width:161px;height:20px;overflow:hidden;"><div style="left:2px;top:2px;width:16px;height:16px;background:#888888;border:1px solid #000"></div><div class="t" style="left:24px;top:4px;font-size:12px;color:#000"><span class="f" style="--w:41;transform:scaleX(1.0000)"><span class="n">04:</span>幌色</span></div></div>
<div style="left:1190px;top:600px;width:161px;height:20px;overflow:hidden;"><div style="left:2px;top:2px;width:16px;height:16px;background:#aaaaaa;border:1px solid #000"></div><div class="t" style="left:24px;top:4px;font-size:12px;color:#000"><span class="f" style="--w:88;transform:scaleX(0.9888)"><span class="n">05:</span>幌受け色一部</span></div></div>
<div style="left:1190px;top:620px;width:161px;height:20px;overflow:hidden;"><div style="left:2px;top:2px;width:16px;height:16px;background:#7f6e20;border:1px solid #000"></div><div class="t" style="left:24px;top:4px;font-size:12px;color:#000"><span class="f" style="--w:41;transform:scaleX(1.0000)"><span class="n">06:</span>室内</span></div></div>
<div style="left:1190px;top:640px;width:161px;height:20px;overflow:hidden;"><div style="left:2px;top:2px;width:16px;height:16px;background:#ffe400;border:1px solid #000"></div><div class="t" style="left:24px;top:4px;font-size:12px;color:#000"><span class="f" style="--w:91;transform:scaleX(0.9010)"><span class="n">07:</span>種別灯システム</span></div></div>
<div style="left:1190px;top:660px;width:161px;height:20px;overflow:hidden;"><div style="left:2px;top:2px;width:16px;height:16px;background:#fff;border:1px solid #000"></div><div class="t" style="left:24px;top:4px;font-size:12px;color:#000"><span class="f" style="--w:109;transform:scaleX(0.7956)"><span class="n">08:</span>テールライトシステム</span></div></div>
<div style="left:1190px;top:680px;width:161px;height:20px;overflow:hidden;"><div style="left:2px;top:2px;width:16px;height:16px;background:#fff;border:1px solid #000"></div><div class="t" style="left:24px;top:4px;font-size:12px;color:#000"><span class="f" style="--w:68;transform:scaleX(0.7640)"><span class="n">09:</span>ヘッドライト</span></div></div>
<div style="left:1190px;top:700px;width:161px;height:20px;overflow:hidden;"><div style="left:2px;top:2px;width:16px;height:16px;background:#c8c8c8;border:1px solid #000"></div><div class="t" style="left:24px;top:4px;font-size:12px;color:#000"><span class="f" style="--w:66;transform:scaleX(0.8571)"><span class="n">10:</span>ライト外装</span></div></div>
<div style="left:1190px;top:720px;width:161px;height:6px;overflow:hidden;"><div style="left:2px;top:2px;width:16px;height:16px;background:#fff;border:1px solid #000"></div><div class="t" style="left:24px;top:4px;font-size:12px;color:#000"><span class="f" style="--w:70;transform:scaleX(0.7000)"><span class="n">11:</span>ライトシステム</span></div></div>
<div style="left:1351px;top:439px;width:15px;height:288px;background:#f0f0f0"></div>
<div style="left:1351px;top:454px;width:15px;height:133px;background:#cdcdcd"></div>
<div style="left:1353px;top:446px;width:11px;height:8px"><svg width="11" height="8"><path d="M1.5 6.5 L5.5 2.5 L9.5 6.5" stroke="#606060" stroke-width="2" fill="none"/></svg></div>
<div style="left:1353px;top:711px;width:11px;height:8px"><svg width="11" height="8"><path d="M1.5 1.5 L5.5 5.5 L9.5 1.5" stroke="#606060" stroke-width="2" fill="none"/></svg></div>
<div style="left:146px;top:61px;width:1037px;height:667px;border-top:2px solid #707070;border-left:2px solid #707070;border-bottom:2px solid #fff"></div>
<div style="left:148px;top:63px;width:1px;height:663px;background:#a0a0a0"></div><div style="left:149px;top:63px;width:1px;height:663px;background:#696969"></div>
<div style="left:150px;top:82px;width:1033px;height:1px;background:#fff"></div>
<div style="left:1183px;top:61px;width:1px;height:666px;background:#fff"></div><div style="left:145px;top:61px;width:1px;height:666px;background:#f6f6f6"></div>
<div class="t" style="left:158px;top:67px;font-size:12.5px;font-weight:bold;color:#7a0a8a">Pers</div>
<div class="btn" style="left:189px;top:64px;width:19px;height:17px;line-height:14px;padding-top:1px;line-height:14px;font-size:13px">点</div>
<div class="btn" style="left:211px;top:64px;width:19px;height:17px;line-height:14px;padding-top:1px;line-height:14px;font-size:13px">辺</div>
<div class="btn prs" style="left:233px;top:64px;width:19px;height:17px;line-height:14px;padding-top:1px;line-height:14px;font-size:13px;padding-left:1px">面</div>
<div class="btn" style="left:255px;top:64px;width:19px;height:17px;line-height:14px;padding-top:1px;line-height:14px;font-size:13px">簡</div>
<div class="btn" style="left:277px;top:64px;width:19px;height:17px;line-height:14px;padding-top:1px;line-height:14px;font-size:13px">前</div>
<div class="btn" style="left:300px;top:64px;width:30px;height:17px;line-height:14px;padding-top:1px;line-height:14px;font-size:13px">下絵</div>
<div style="left:1122px;top:64px;width:60px;height:18px"><svg width="60" height="18" viewBox="0 0 60 18">
<circle cx="7" cy="6.5" r="5.2" fill="#20e8f8" stroke="#e8e000" stroke-width="2.2"/><circle cx="7" cy="6.5" r="6.4" fill="none" stroke="#8a7a00" stroke-width="0.7"/>
<path d="M11 10.5 L16 15.5" stroke="#e8e000" stroke-width="3"/><path d="M5.5 4 L7.5 5.5" stroke="#fff" stroke-width="1.2"/>
<path d="M29 1 L37 9 L29 17 L21 9 Z" fill="#10e010" stroke="#0a8a0a" stroke-width="0.8"/>
<path d="M26 6 L27 7 M32 6 L31 7 M26 12 L27 11 M32 12 L31 11" stroke="#fff" stroke-width="1.2"/><circle cx="29" cy="9" r="0.8" fill="#000"/>
<path d="M48.0 1.0 L51.0 1.0 L51.5 3.0 L52.5 5.0 L53.0 8.0 L54.0 5.5 L56.0 6.5 L57.0 9.0 L55.5 11.5 L53.0 12.0 L52.0 15.0 L51.0 17.0 L47.0 17.0 L46.0 14.0 L47.0 12.0 L50.0 12.0 L50.0 11.0 L44.0 11.5 L41.5 10.0 L41.0 8.0 L43.0 5.5 L45.0 6.0 L45.5 8.0 L50.0 8.0 L50.0 6.0 L47.0 5.0 L46.0 3.5 Z" fill="#ff10ff" stroke="#900090" stroke-width="0.8" stroke-linejoin="round"/>
</svg></div>
<div style="left:0;top:728px;width:1366px;height:8px;background:linear-gradient(90deg,#8c8a86 0%,#9a9690 25%,#928e89 45%,#85837f 55%,#7e7d7a 65%,#6f6e6c 77%,#76706e 90%,#8e7f7b 94%,#7a7878 100%)"></div>
<div style="left:1255px;top:728px;width:90px;height:8px;background:linear-gradient(90deg,#9a8480,#b48e88,#a8847e)"></div>
<div style="left:0;top:728px;width:3px;height:8px;background:#b4b4c0"></div>
<div style="left:3px;top:728px;width:60px;height:8px;background:#666666"></div>
<div style="left:14px;top:731px;width:19px;height:5px;background:#22c4f4;clip-path:polygon(0 0,100% 35%,100% 100%,0 100%)"></div>
<div style="left:63px;top:728px;width:51px;height:8px;background:#a29e98;border:1px solid #c4c0ba;border-bottom:none"></div>
<div style="left:74px;top:734px;width:14px;height:2px;background:#d8b060"></div>
<div style="left:114px;top:728px;width:4px;height:8px;border-left:1px solid #b8b4ae;border-right:1px solid #b8b4ae"></div>
<div style="left:125px;top:728px;width:62px;height:8px;background:#a4a09a;border:1px solid #c4c0ba;border-bottom:none"></div>
<div style="left:148px;top:734px;width:10px;height:2px;background:#e04030;border-radius:4px 4px 0 0"></div>
<div style="left:187px;top:728px;width:54px;height:8px;background:#a8a49f;border:1px solid #f4f4f4;border-bottom:none"></div>
<div style="left:199px;top:733px;width:22px;height:3px;background:#fff;border:1px solid #fff"></div>
<div style="left:201px;top:735px;width:18px;height:1px;background:#3a6a70"></div>
<div style="left:219px;top:731px;width:8px;height:5px;background:#30d020;border-radius:4px 4px 0 0"></div>
<div style="left:241px;top:728px;width:4px;height:8px;border-left:1px solid #f0f0f0;border-right:1px solid #c0bcb6"></div>
<div style="left:264px;top:733px;width:16px;height:3px;background:#2050b0;clip-path:polygon(0 100%,100% 0,100% 100%)"></div>
<div style="left:326px;top:733px;width:17px;height:3px;background:#108040;clip-path:polygon(0 100%,100% 0,100% 100%)"></div>
<div style="left:389px;top:733px;width:22px;height:3px;background:#f0a020;border-radius:3px 3px 0 0"></div>
<div style="left:449px;top:733px;width:31px;height:3px;background:linear-gradient(90deg,#f01010 12%,#1010e0 15%,#1010e0 70%,#000 75%);border-top:1px solid #fff"></div>
<div style="left:511px;top:733px;width:30px;height:3px;background:#1890f0;border-radius:3px 3px 0 0"></div>
<div style="left:574px;top:733px;width:6px;height:3px;background:#1a3aa0"></div>
<div style="left:634px;top:733px;width:31px;height:3px;background:#e07a30;border-radius:3px 3px 0 0"></div>
<div style="left:699px;top:733px;width:26px;height:3px;background:#2aa0e0;border-radius:8px 8px 0 0"></div><div style="left:150px;top:83px;width:1033px;height:643px;overflow:hidden"><svg width="1033" height="643" viewBox="150 83 1033 643" shape-rendering="crispEdges" style="position:absolute;left:0;top:0">
<rect x="149" y="83" width="1034" height="643" fill="#1f4059"/>
<path d="M713.5 394.4L392.4 463.7M713.5 394.4L1212.6 433.6M735.7 396.1L417.5 466.4M700.3 397.2L1203.1 437.2M758.1 397.9L442.9 469.0M686.9 400.1L1193.3 440.9M780.8 399.7L468.7 471.8M673.2 403.1L1183.4 444.7M803.8 401.5L494.9 474.5M659.3 406.1L1173.2 448.6M827.1 403.3L521.5 477.3M645.1 409.2L1162.8 452.6M850.6 405.2L548.5 480.2M630.6 412.3L1152.2 456.6M874.5 407.0L575.8 483.1M615.8 415.5L1141.3 460.8M898.6 408.9L603.6 486.0M600.7 418.7L1130.1 465.0M923.0 410.8L631.8 489.0M585.3 422.1L1118.7 469.4M947.7 412.8L660.4 492.0M569.6 425.5L1107.1 473.9M972.7 414.7L689.5 495.1M553.6 428.9L1095.1 478.4M998.1 416.7L719.1 498.2M537.2 432.5L1082.9 483.1M1023.7 418.7L749.1 501.4M520.4 436.1L1070.3 487.9M1049.7 420.8L779.5 504.6M503.3 439.8L1057.5 492.8M1076.0 422.8L810.5 507.8M485.9 443.5L1044.3 497.8M1102.6 424.9L841.9 511.2M468.0 447.4L1030.7 503.0M1129.6 427.1L873.9 514.5M449.8 451.3L1016.9 508.3M1156.9 429.2L906.4 518.0M431.1 455.4L1002.6 513.7M1184.6 431.4L939.4 521.5M412.0 459.5L988.0 519.3M1212.6 433.6L973.0 525.0M392.4 463.7L973.0 525.0" stroke="#6f735a" stroke-width="1" fill="none" shape-rendering="crispEdges"/>
<path d="M820 448 L1173 479" stroke="#e01010" stroke-width="1.3" fill="none"/>
<path d="M820 448 L623 502" stroke="#1010e8" stroke-width="1.3" fill="none"/>
<path d="M821.5 83 L821.5 448" stroke="#10c010" stroke-width="1.3" fill="none"/>
<polygon points="674.0,444.0 715.0,446.0 715.0,477.5 674.0,474.5" fill="#3c3c3c" />
<polygon points="715.0,446.0 739.0,439.0 739.0,469.5 715.0,477.5" fill="#565656" />
<polygon points="786.0,425.0 826.0,416.0 826.0,454.2 786.0,451.8" fill="#3b3b3b" />
<linearGradient id="bxg" x1="826" y1="0" x2="945" y2="0" gradientUnits="userSpaceOnUse"><stop offset="0" stop-color="#565656"/><stop offset="1" stop-color="#474747"/></linearGradient>
<polygon points="826.0,416.0 945.5,378.0 945.5,420.4 826.0,454.2" fill="url(#bxg)" />
<polygon points="945.5,378.0 974.5,370.0 974.5,400.3 945.5,408.3" fill="#4a4a4a" />
<polygon points="563.0,256.0 1120.0,196.0 1127.0,201.0 1127.0,334.0 1122.0,342.0 563.0,485.2" fill="#b07929" />
<polygon points="563.0,256.0 1124.0,196.0 1124.0,219.6 563.0,295.3" fill="#d18d2e" />
<polygon points="563.0,258.5 1124.0,197.5 1124.0,219.6 563.0,295.3" fill="#cf8c2e" />
<polygon points="563.0,260.9 1124.0,199.0 1124.0,219.6 563.0,295.3" fill="#cd8b2d" />
<polygon points="563.0,263.4 1124.0,200.4 1124.0,219.6 563.0,295.3" fill="#cb8a2d" />
<polygon points="563.0,265.8 1124.0,201.9 1124.0,219.6 563.0,295.3" fill="#c9882d" />
<polygon points="563.0,268.3 1124.0,203.4 1124.0,219.6 563.0,295.3" fill="#c7872d" />
<polygon points="563.0,270.7 1124.0,204.8 1124.0,219.6 563.0,295.3" fill="#c5862c" />
<polygon points="563.0,273.2 1124.0,206.3 1124.0,219.6 563.0,295.3" fill="#c3852c" />
<polygon points="563.0,275.7 1124.0,207.8 1124.0,219.6 563.0,295.3" fill="#c1832c" />
<polygon points="563.0,278.1 1124.0,209.3 1124.0,219.6 563.0,295.3" fill="#bf822c" />
<polygon points="563.0,280.6 1124.0,210.7 1124.0,219.6 563.0,295.3" fill="#bd812b" />
<polygon points="563.0,283.0 1124.0,212.2 1124.0,219.6 563.0,295.3" fill="#bb802b" />
<polygon points="563.0,285.5 1124.0,213.7 1124.0,219.6 563.0,295.3" fill="#b97e2b" />
<polygon points="563.0,287.9 1124.0,215.1 1124.0,219.6 563.0,295.3" fill="#b77d2b" />
<polygon points="563.0,290.4 1124.0,216.6 1124.0,219.6 563.0,295.3" fill="#b57c2a" />
<polygon points="563.0,292.9 1124.0,218.1 1124.0,219.6 563.0,295.3" fill="#b37b2a" />
<polygon points="1120.0,196.0 1124.0,197.0 1127.0,201.0 1127.0,204.0 1120.0,204.0" fill="#d69230" />
<polygon points="678.0,279.7 1101.0,222.1 1101.0,311.0 678.0,403.0" fill="#d5ca52" />
<polygon points="1106.0,220.0 1124.0,218.0 1122.0,333.0 1106.0,335.0" fill="#d5ca52" />
<polygon points="1106.0,326.0 1122.0,322.0 1122.0,332.0 1106.0,336.0" fill="#8a8a8a" />
<polygon points="581.0,292.9 602.0,290.0 602.0,453.0 581.0,461.0" fill="#d5ca52" />
<polygon points="633.0,285.8 671.0,280.6 671.0,437.0 633.0,447.0" fill="#d5ca52" />
<polygon points="581.0,449.0 602.0,452.0 602.0,450.0 581.0,456.0" fill="#7c7c7c" />
<polygon points="581.0,455.0 602.0,450.0 602.0,455.0 581.0,461.0" fill="#a4a4a4" />
<polygon points="633.0,430.0 670.0,434.5 670.0,435.0 633.0,441.0" fill="#7c7c7c" />
<polygon points="633.0,441.0 670.0,433.0 670.0,437.5 633.0,448.0" fill="#a4a4a4" />
<polygon points="573.0,362.0 574.6,362.0 574.6,451.0 573.0,451.0" fill="#d5ca52" />
<polygon points="678.0,386.0 698.0,385.0 698.0,401.0 678.0,404.0" fill="#7c7c7c" />
<polygon points="757.0,375.0 766.0,374.0 766.0,387.0 757.0,388.0" fill="#7c7c7c" />
<polygon points="824.0,363.0 827.0,363.0 827.0,373.0 824.0,373.0" fill="#7c7c7c" />
<linearGradient id="rg" x1="0" y1="0" x2="0.12" y2="1"><stop offset="0" stop-color="#595959"/><stop offset="0.45" stop-color="#6a6a6a"/><stop offset="1" stop-color="#8e8e8e"/></linearGradient>
<polygon points="404.5,249.0 475.0,242.2 530.0,236.9 562.6,233.8 563.0,233.7 650.0,225.3 750.0,215.7 850.0,206.0 950.0,196.0 1000.0,191.0 1053.0,191.5 1120.0,194.3 1120.0,196.0 1053.0,203.2 1000.0,208.9 950.0,214.3 850.0,225.1 750.0,235.9 650.0,246.6 563.0,256.0 562.6,258.5 530.0,258.5 475.0,255.0 404.5,253.4" fill="#656565" />
<polygon points="404.5,249.3 475.0,243.0 530.0,238.3 562.6,235.3 563.0,235.1 650.0,226.7 750.0,216.9 850.0,207.2 950.0,197.1 1000.0,192.1 1053.0,192.2 1120.0,194.4 1120.0,196.0 1053.0,203.2 1000.0,208.9 950.0,214.3 850.0,225.1 750.0,235.9 650.0,246.6 563.0,256.0 562.6,258.5 530.0,258.5 475.0,255.0 404.5,253.4" fill="#646464" />
<polygon points="404.5,249.5 475.0,243.8 530.0,239.6 562.6,236.9 563.0,236.5 650.0,228.0 750.0,218.2 850.0,208.4 950.0,198.3 1000.0,193.2 1053.0,193.0 1120.0,194.5 1120.0,196.0 1053.0,203.2 1000.0,208.9 950.0,214.3 850.0,225.1 750.0,235.9 650.0,246.6 563.0,256.0 562.6,258.5 530.0,258.5 475.0,255.0 404.5,253.4" fill="#626262" />
<polygon points="404.5,249.8 475.0,244.6 530.0,241.0 562.6,238.4 563.0,237.9 650.0,229.3 750.0,219.5 850.0,209.6 950.0,199.4 1000.0,194.4 1053.0,193.7 1120.0,194.6 1120.0,196.0 1053.0,203.2 1000.0,208.9 950.0,214.3 850.0,225.1 750.0,235.9 650.0,246.6 563.0,256.0 562.6,258.5 530.0,258.5 475.0,255.0 404.5,253.4" fill="#606060" />
<polygon points="404.5,250.1 475.0,245.4 530.0,242.3 562.6,240.0 563.0,239.3 650.0,230.7 750.0,220.7 850.0,210.8 950.0,200.6 1000.0,195.5 1053.0,194.4 1120.0,194.7 1120.0,196.0 1053.0,203.2 1000.0,208.9 950.0,214.3 850.0,225.1 750.0,235.9 650.0,246.6 563.0,256.0 562.6,258.5 530.0,258.5 475.0,255.0 404.5,253.4" fill="#5e5e5e" />
<polygon points="404.5,250.4 475.0,246.2 530.0,243.7 562.6,241.5 563.0,240.7 650.0,232.0 750.0,222.0 850.0,212.0 950.0,201.7 1000.0,196.6 1053.0,195.2 1120.0,194.8 1120.0,196.0 1053.0,203.2 1000.0,208.9 950.0,214.3 850.0,225.1 750.0,235.9 650.0,246.6 563.0,256.0 562.6,258.5 530.0,258.5 475.0,255.0 404.5,253.4" fill="#606060" />
<polygon points="404.5,250.6 475.0,247.0 530.0,245.0 562.6,243.1 563.0,242.1 650.0,233.3 750.0,223.2 850.0,213.2 950.0,202.9 1000.0,197.7 1053.0,195.9 1120.0,194.9 1120.0,196.0 1053.0,203.2 1000.0,208.9 950.0,214.3 850.0,225.1 750.0,235.9 650.0,246.6 563.0,256.0 562.6,258.5 530.0,258.5 475.0,255.0 404.5,253.4" fill="#636363" />
<polygon points="404.5,250.9 475.0,247.8 530.0,246.4 562.6,244.6 563.0,243.5 650.0,234.7 750.0,224.5 850.0,214.4 950.0,204.0 1000.0,198.8 1053.0,196.6 1120.0,195.0 1120.0,196.0 1053.0,203.2 1000.0,208.9 950.0,214.3 850.0,225.1 750.0,235.9 650.0,246.6 563.0,256.0 562.6,258.5 530.0,258.5 475.0,255.0 404.5,253.4" fill="#676767" />
<polygon points="404.5,251.2 475.0,248.6 530.0,247.7 562.6,246.1 563.0,244.9 650.0,236.0 750.0,225.8 850.0,215.5 950.0,205.2 1000.0,200.0 1053.0,197.4 1120.0,195.2 1120.0,196.0 1053.0,203.2 1000.0,208.9 950.0,214.3 850.0,225.1 750.0,235.9 650.0,246.6 563.0,256.0 562.6,258.5 530.0,258.5 475.0,255.0 404.5,253.4" fill="#6b6b6b" />
<polygon points="404.5,251.5 475.0,249.4 530.0,249.1 562.6,247.7 563.0,246.3 650.0,237.3 750.0,227.0 850.0,216.7 950.0,206.3 1000.0,201.1 1053.0,198.1 1120.0,195.3 1120.0,196.0 1053.0,203.2 1000.0,208.9 950.0,214.3 850.0,225.1 750.0,235.9 650.0,246.6 563.0,256.0 562.6,258.5 530.0,258.5 475.0,255.0 404.5,253.4" fill="#6f6f6f" />
<polygon points="404.5,251.7 475.0,250.2 530.0,250.4 562.6,249.2 563.0,247.7 650.0,238.6 750.0,228.3 850.0,217.9 950.0,207.5 1000.0,202.2 1053.0,198.8 1120.0,195.4 1120.0,196.0 1053.0,203.2 1000.0,208.9 950.0,214.3 850.0,225.1 750.0,235.9 650.0,246.6 563.0,256.0 562.6,258.5 530.0,258.5 475.0,255.0 404.5,253.4" fill="#737373" />
<polygon points="404.5,252.0 475.0,251.0 530.0,251.8 562.6,250.8 563.0,249.0 650.0,240.0 750.0,229.5 850.0,219.1 950.0,208.6 1000.0,203.3 1053.0,199.6 1120.0,195.5 1120.0,196.0 1053.0,203.2 1000.0,208.9 950.0,214.3 850.0,225.1 750.0,235.9 650.0,246.6 563.0,256.0 562.6,258.5 530.0,258.5 475.0,255.0 404.5,253.4" fill="#787878" />
<polygon points="404.5,252.3 475.0,251.8 530.0,253.1 562.6,252.3 563.0,250.4 650.0,241.3 750.0,230.8 850.0,220.3 950.0,209.7 1000.0,204.5 1053.0,200.3 1120.0,195.6 1120.0,196.0 1053.0,203.2 1000.0,208.9 950.0,214.3 850.0,225.1 750.0,235.9 650.0,246.6 563.0,256.0 562.6,258.5 530.0,258.5 475.0,255.0 404.5,253.4" fill="#7d7d7d" />
<polygon points="404.5,252.6 475.0,252.6 530.0,254.5 562.6,253.9 563.0,251.8 650.0,242.6 750.0,232.1 850.0,221.5 950.0,210.9 1000.0,205.6 1053.0,201.0 1120.0,195.7 1120.0,196.0 1053.0,203.2 1000.0,208.9 950.0,214.3 850.0,225.1 750.0,235.9 650.0,246.6 563.0,256.0 562.6,258.5 530.0,258.5 475.0,255.0 404.5,253.4" fill="#818181" />
<polygon points="404.5,252.8 475.0,253.4 530.0,255.8 562.6,255.4 563.0,253.2 650.0,244.0 750.0,233.3 850.0,222.7 950.0,212.0 1000.0,206.7 1053.0,201.8 1120.0,195.8 1120.0,196.0 1053.0,203.2 1000.0,208.9 950.0,214.3 850.0,225.1 750.0,235.9 650.0,246.6 563.0,256.0 562.6,258.5 530.0,258.5 475.0,255.0 404.5,253.4" fill="#868686" />
<polygon points="404.5,253.1 475.0,254.2 530.0,257.2 562.6,257.0 563.0,254.6 650.0,245.3 750.0,234.6 850.0,223.9 950.0,213.2 1000.0,207.8 1053.0,202.5 1120.0,195.9 1120.0,196.0 1053.0,203.2 1000.0,208.9 950.0,214.3 850.0,225.1 750.0,235.9 650.0,246.6 563.0,256.0 562.6,258.5 530.0,258.5 475.0,255.0 404.5,253.4" fill="#8b8b8b" />
<polygon points="394.0,260.7 404.5,249.0 404.5,253.5" fill="#6a6a6a" />
<path d="M821.5 200 L821.5 215" stroke="#10c010" stroke-width="1" fill="none"/>
<linearGradient id="fb" x1="394" y1="0" x2="563" y2="0" gradientUnits="userSpaceOnUse"><stop offset="0" stop-color="#5e4422"/><stop offset="0.5" stop-color="#9a6a28"/><stop offset="0.9" stop-color="#c8882c"/><stop offset="1" stop-color="#d89030"/></linearGradient>
<polygon points="394.0,260.7 401.0,253.3 475.0,255.0 530.0,258.5 563.0,258.5 563.0,256.0 566.0,262.0 566.0,290.0 559.3,287.8 550.1,278.0 553.4,268.8 475.0,263.7 398.0,261.3" fill="url(#fb)" />
<radialGradient id="cg" cx="0.5" cy="0.35" r="0.5"><stop offset="0" stop-color="#e49a30"/><stop offset="0.5" stop-color="#e09630" stop-opacity="0.7"/><stop offset="1" stop-color="#e09630" stop-opacity="0"/></radialGradient>
<polygon points="398.0,261.3 475.0,263.7 553.4,268.8 550.1,278.0 559.3,287.8 563.5,279.0 563.5,487.0 538.6,490.7 475.0,485.7 367.0,473.0 368.0,284.5 381.3,271.0 398.0,270.5" fill="#d5ca52" />
<clipPath id="sc"><polygon points="550,258.5 563,256 700,241 700,320 563.5,320 563.5,279 559.3,287.8 550.1,278 553.4,268.8"/></clipPath><ellipse cx="567" cy="272" rx="15" ry="30" fill="url(#cg)" clip-path="url(#sc)"/>
<linearGradient id="wl" x1="364" y1="0" x2="424" y2="0" gradientUnits="userSpaceOnUse"><stop offset="0" stop-color="#7d8a80"/><stop offset="0.08" stop-color="#aeab7a"/><stop offset="0.5" stop-color="#a9a674"/><stop offset="1" stop-color="#b3b080"/></linearGradient>
<polygon points="364.0,310.6 424.0,304.0 420.0,411.0 367.0,408.0" fill="url(#wl)" />
<linearGradient id="wr" x1="477" y1="0" x2="547" y2="0" gradientUnits="userSpaceOnUse"><stop offset="0" stop-color="#aeab76"/><stop offset="1" stop-color="#b9b685"/></linearGradient>
<polygon points="477.0,307.0 535.0,318.0 541.5,321.0 531.0,422.0 477.0,415.0" fill="url(#wr)" />
<polygon points="546.5,299.0 541.5,321.0 531.0,422.0 547.0,422.0" fill="#cfca8f" />
<linearGradient id="lb" x1="367" y1="470" x2="563" y2="430" gradientUnits="userSpaceOnUse"><stop offset="0" stop-color="#372c21"/><stop offset="0.3" stop-color="#5e4726"/><stop offset="0.55" stop-color="#835e2a"/><stop offset="0.85" stop-color="#bc822c"/><stop offset="0.95" stop-color="#d08c2c"/><stop offset="1" stop-color="#b57c2a"/></linearGradient><linearGradient id="lbv" x1="0" y1="405" x2="0" y2="490" gradientUnits="userSpaceOnUse"><stop offset="0" stop-color="#fff" stop-opacity="0.10"/><stop offset="1" stop-color="#000" stop-opacity="0.12"/></linearGradient>
<polygon points="367.0,408.0 420.0,411.0 420.0,464.0 473.6,469.0 473.6,415.0 547.0,422.0 563.5,420.0 563.5,487.0 538.6,490.7 475.0,485.7 367.0,473.0" fill="url(#lb)" />
<polygon points="367.0,408.0 420.0,411.0 420.0,464.0 473.6,469.0 473.6,415.0 547.0,422.0 563.5,420.0 563.5,487.0 538.6,490.7 475.0,485.7 367.0,473.0" fill="url(#lbv)" />
<polygon points="421.0,451.4 467.9,445.0 467.9,437.9 473.6,438.6 473.6,460.7 421.0,453.6" fill="#7e7e7e" />
<path d="M367.5 284 L367.5 473" stroke="#2b3038" stroke-width="1" opacity="0.6"/>
</svg></div>
<div style="left:1021px;top:386px;width:86px;height:181px;background:#f0f0f0;border:1px solid #404040"></div>
<div style="left:1022px;top:387px;width:84px;height:179px;border:2px solid #dbe6f2;border-top:1px solid #fff"></div>
<div style="left:1023px;top:388px;width:82px;height:24px;background:linear-gradient(#b8c8d8,#d7e4f1)"></div>
<div class="t" style="left:1024px;top:394px;font-size:14px;color:#000">選択</div>
<div class="btn prs" style="left:1032px;top:420px;width:64px;height:17px;line-height:14px">通常</div>
<div class="btn" style="left:1032px;top:437px;width:64px;height:17px;line-height:14px">接続面</div>
<div class="btn" style="left:1032px;top:453px;width:64px;height:17px;line-height:14px">ベルト</div>
<div class="btn" style="left:1032px;top:470px;width:64px;height:17px;line-height:14px">連続辺</div>
<div class="btn" style="left:1032px;top:487px;width:64px;height:17px;line-height:14px">拡張</div>
<div class="btn" style="left:1032px;top:504px;width:64px;height:17px;line-height:14px">ルート</div>
<div class="btn" style="left:1032px;top:521px;width:64px;height:17px;line-height:14px">現物指定</div>
<div class="btn" style="left:1032px;top:538px;width:64px;height:17px;line-height:14px">ブラシ選択</div>
<script>document.querySelectorAll(".f,.fc").forEach(function(e){var w=parseFloat(e.style.getPropertyValue("--w"));var a=e.offsetWidth;if(w&&a)e.style.transform="scaleX("+(w/a)+")";});</script></body></html>
